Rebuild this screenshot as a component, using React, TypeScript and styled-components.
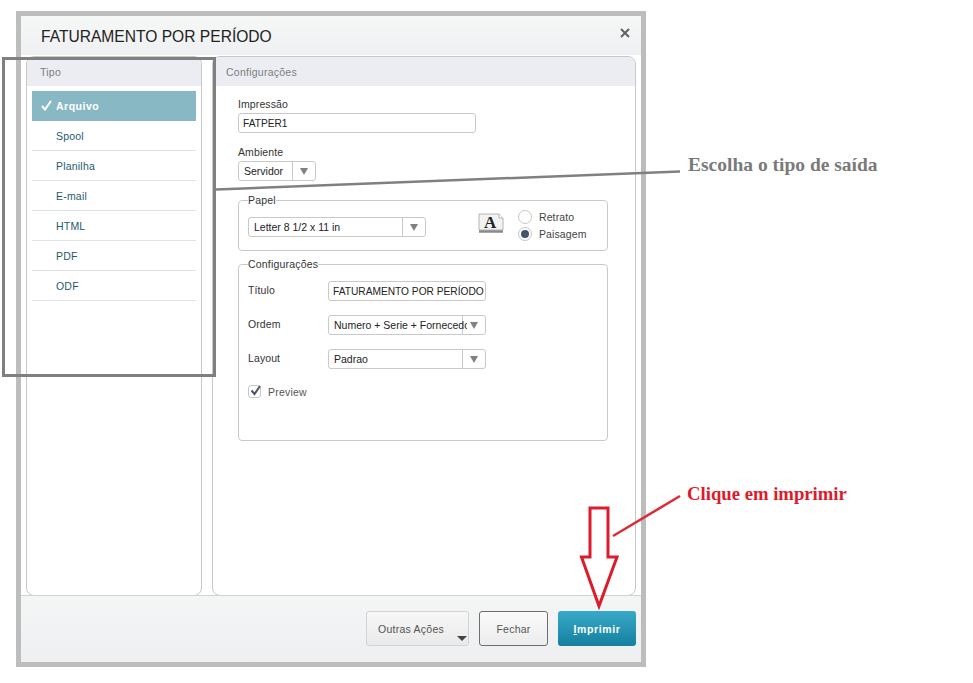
import React from "react";
import styled, { createGlobalStyle } from "styled-components";

const Global = createGlobalStyle`
  html, body { margin: 0; padding: 0; background: #fff; }
  body { font-family: "Liberation Sans", Arial, sans-serif; font-size: 11px; color: #333; }
`;

const Page = styled.div`
  position: relative;
  width: 973px;
  height: 683px;
  box-sizing: border-box;
  padding: 11px 0 0 16px;
  overflow: hidden;
`;
const Dialog = styled.div`
  width: 630px;
  height: 656px;
  box-sizing: border-box;
  border: 5px solid #bdbdbd;
  background: #fff;
  display: flex;
  flex-direction: column;
`;
const Header = styled.div`
  height: 39px;
  flex: none;
  display: flex;
  align-items: center;
  justify-content: space-between;
  padding: 0 10px 0 20px;
  background: linear-gradient(#f6f7f7, #eff0f1);
`;
const Title = styled.h1`
  margin: 0;
  font-size: 15.6px;
  font-weight: 400;
  color: #222;
  position: relative;
  top: 1px;
`;
const CloseIcon = styled.svg`
  width: 10px;
  height: 10px;
  position: relative;
  top: -3px;
  left: -1px;
`;
const Body = styled.div`
  flex: 1;
  min-height: 0;
  display: flex;
  gap: 10px;
  padding: 1px 5px 0;
  overflow: hidden;
`;
const Panel = styled.section<{ $w: number }>`
  width: ${(p) => p.$w}px;
  flex: none;
  box-sizing: border-box;
  height: 540px;
  border: 1px solid #c8c8c8;
  border-radius: 8px;
  overflow: hidden;
  background: #fff;
`;
const PanelHead = styled.div`
  height: 29px;
  line-height: 30px;
  padding-left: 13px;
  background: #ecedf2;
  color: #7b7d80;
  font-size: 10.5px;
  letter-spacing: 0.25px;
`;
const List = styled.ul`
  list-style: none;
  margin: 5px 5px 0;
  padding: 0;
`;
const Item = styled.li<{ $active?: boolean }>`
  position: relative;
  height: 30px;
  line-height: 30px;
  box-sizing: border-box;
  padding-left: 24px;
  font-size: 10.5px;
  letter-spacing: ${(p) => (p.$active ? 0.5 : 0.2)}px;
  color: ${(p) => (p.$active ? "#fff" : "#1f5a6e")};
  font-weight: ${(p) => (p.$active ? 700 : 400)};
  background: ${(p) => (p.$active ? "#89b8c5" : "transparent")};
  border-bottom: ${(p) => (p.$active ? "0" : "1px solid #dfe4e8")};
`;
const Check = styled.svg`
  position: absolute;
  left: 9px;
  top: 9px;
  width: 11px;
  height: 11px;
`;
const Form = styled.div`
  padding: 10px 27px 0 25px;
  display: flex;
  flex-direction: column;
`;
const Label = styled.label`
  display: block;
  font-size: 10.5px;
  line-height: 17px;
  letter-spacing: 0.1px;
  color: #333;
`;
const Box = styled.div<{ $w: number }>`
  width: ${(p) => p.$w}px;
  height: 20px;
  box-sizing: border-box;
  border: 1px solid #c9c9c9;
  border-radius: 3px;
  background: #fff;
  display: flex;
  align-items: center;
  font-size: 10.5px;
  color: #222;
  white-space: nowrap;
  overflow: hidden;
`;
const InputBox = styled(Box)`
  padding-left: 4px;
  font-size: 10.2px;
`;
const SelectText = styled.span`
  flex: 1;
  min-width: 0;
  overflow: hidden;
  padding-left: 5px;
  margin-right: -5px;
  position: relative;
`;
const Caret = styled.span`
  flex: none;
  width: 23px;
  height: 100%;
  box-sizing: border-box;
  border-left: 1px solid #c9c9c9;
  display: flex;
  align-items: center;
  justify-content: center;
  &::after {
    content: "";
    border-left: 4.5px solid transparent;
    border-right: 4.5px solid transparent;
    border-top: 7px solid #7e8287;
  }
`;
const Group = styled.div`
  margin-bottom: 11px;
`;
const Fieldset = styled.fieldset<{ $h: number; $mt: number }>`
  margin: ${(p) => p.$mt}px 0 0;
  padding: 0 9px;
  height: ${(p) => p.$h}px;
  box-sizing: border-box;
  border: 1px solid #c9c9c9;
  border-radius: 4px;
  width: 370px;
`;
const Legend = styled.legend`
  padding: 0;
  font-size: 10.5px;
  letter-spacing: 0.2px;
  line-height: 13px;
  color: #333;
`;
const PaperRow = styled.div`
  display: flex;
  align-items: flex-start;
  padding-top: 10px;
`;
const PageIcon = styled.svg`
  width: 26px;
  height: 21px;
  margin: -4px 0 0 52px;
  flex: none;
`;
const Radios = styled.div`
  margin: -7px 0 0 14px;
  display: flex;
  flex-direction: column;
  gap: 3px;
`;
const RadioRow = styled.div`
  display: flex;
  align-items: center;
  gap: 7px;
  height: 14px;
  font-size: 10.5px;
  letter-spacing: 0.1px;
  color: #444;
`;
const Radio = styled.span<{ $on?: boolean }>`
  width: 14px;
  height: 14px;
  box-sizing: border-box;
  border: 1px solid #c6c6c6;
  border-radius: 50%;
  background: #fff;
  display: flex;
  align-items: center;
  justify-content: center;
  &::after {
    content: "";
    width: 8px;
    height: 8px;
    border-radius: 50%;
    background: ${(p) => (p.$on ? "#47536b" : "transparent")};
  }
`;
const ConfRows = styled.div`
  display: flex;
  flex-direction: column;
  gap: 14px;
  padding-top: 10px;
`;
const ConfRow = styled.div`
  display: grid;
  grid-template-columns: 80px 158px;
  align-items: center;
`;
const ConfLabel = styled.span`
  font-size: 10.5px;
  letter-spacing: 0.1px;
  color: #333;
  position: relative;
  top: -1px;
`;
const PreviewRow = styled.div`
  display: flex;
  align-items: center;
  gap: 7px;
  margin-top: 16px;
  font-size: 10.5px;
  letter-spacing: 0.2px;
  color: #555;
`;
const CheckBox = styled.span`
  width: 13px;
  height: 13px;
  box-sizing: border-box;
  border: 1px solid #c6c6c6;
  border-radius: 3px;
  position: relative;
  flex: none;
`;
const CheckMark = styled.svg`
  position: absolute;
  left: 0;
  top: -2px;
  width: 13px;
  height: 13px;
`;
const Footer = styled.footer`
  height: 67px;
  flex: none;
  box-sizing: border-box;
  border-top: 1px solid #d2d2d2;
  background: linear-gradient(#f4f5f5, #eeeff1);
  display: flex;
  justify-content: flex-end;
  gap: 10px;
  padding: 15px 5px 0 0;
`;
const Button = styled.button`
  height: 35px;
  box-sizing: border-box;
  border-radius: 3px;
  font-family: inherit;
  font-size: 10.5px;
  letter-spacing: 0.25px;
  padding: 0;
  position: relative;
`;
const MenuButton = styled(Button)`
  width: 103px;
  border: 1px solid #d3d3d3;
  background: linear-gradient(#f7f7f7, #eaeaea);
  color: #555;
  text-align: left;
  padding: 0 0 0 11px;
  &::after {
    content: "";
    position: absolute;
    right: 1px;
    bottom: 4px;
    border-left: 5px solid transparent;
    border-right: 5px solid transparent;
    border-top: 5px solid #444;
  }
`;
const CloseButton = styled(Button)`
  width: 69px;
  border: 1px solid #6e6e6e;
  background: linear-gradient(#fafafa, #ececec);
  color: #555;
`;
const PrimaryButton = styled(Button)`
  width: 78px;
  border: 0;
  background: linear-gradient(#38a9c8, #15809f);
  color: #fff;
  font-weight: 700;
  letter-spacing: 0.6px;
`;
const Marker = styled.div`
  position: absolute;
  left: 2px;
  top: 57px;
  width: 214px;
  height: 320px;
  box-sizing: border-box;
  border: 3px solid #808080;
  pointer-events: none;
`;
const Drawing = styled.svg`
  position: absolute;
  left: 0;
  top: 0;
  width: 973px;
  height: 683px;
  pointer-events: none;
`;
const Note = styled.div<{ $color: string; $x: number; $y: number; $size: number }>`
  position: absolute;
  left: ${(p) => p.$x}px;
  top: ${(p) => p.$y}px;
  font-family: "Liberation Serif", "Times New Roman", serif;
  font-weight: 700;
  font-size: ${(p) => p.$size}px;
  line-height: 20px;
  white-space: nowrap;
  color: ${(p) => p.$color};
`;

const Select = ({ w, text }: { w: number; text: string }) => (
  <Box $w={w}>
    <SelectText>{text}</SelectText>
    <Caret />
  </Box>
);

export default function App() {
  const items = ["Spool", "Planilha", "E-mail", "HTML", "PDF", "ODF"];
  return (
    <Page>
      <Global />
      <Dialog>
        <Header>
          <Title>FATURAMENTO POR PERÍODO</Title>
          <CloseIcon viewBox="0 0 10 10">
            <path d="M1 1 L9 9 M9 1 L1 9" stroke="#5f6367" strokeWidth="2" />
          </CloseIcon>
        </Header>
        <Body>
          <Panel $w={176}>
            <PanelHead>Tipo</PanelHead>
            <List>
              <Item $active>
                <Check viewBox="0 0 11 11">
                  <path d="M1 6 L4 9.5 L10 1" fill="none" stroke="#fff" strokeWidth="2" />
                </Check>
                Arquivo
              </Item>
              {items.map((t) => (
                <Item key={t}>{t}</Item>
              ))}
            </List>
          </Panel>
          <Panel $w={424}>
            <PanelHead>Configurações</PanelHead>
            <Form>
              <Group>
                <Label>Impressão</Label>
                <InputBox $w={238}>FATPER1</InputBox>
              </Group>
              <Group>
                <Label>Ambiente</Label>
                <Select w={78} text="Servidor" />
              </Group>
              <Fieldset $h={57} $mt={2}>
                <Legend>Papel</Legend>
                <PaperRow>
                  <Select w={178} text="Letter 8 1/2 x 11 in" />
                  <PageIcon viewBox="0 0 26 21">
                    <path d="M1 1 H21 L25 5 V17 H1 Z" fill="#f2f2f2" stroke="#b5b5b5" />
                    <path d="M1 18.5 H25" stroke="#8a8a8a" strokeWidth="2.5" />
                    <path d="M21 1 V5 H25" fill="#fff" stroke="#b5b5b5" />
                    <text x="6" y="15" fontFamily="Liberation Serif, serif" fontWeight="700" fontSize="17" fill="#222">A</text>
                  </PageIcon>
                  <Radios>
                    <RadioRow><Radio />Retrato</RadioRow>
                    <RadioRow><Radio $on />Paisagem</RadioRow>
                  </Radios>
                </PaperRow>
              </Fieldset>
              <Fieldset $h={183} $mt={7}>
                <Legend>Configurações</Legend>
                <ConfRows>
                  <ConfRow>
                    <ConfLabel>Título</ConfLabel>
                    <InputBox $w={158}>FATURAMENTO POR PERÍODO</InputBox>
                  </ConfRow>
                  <ConfRow>
                    <ConfLabel>Ordem</ConfLabel>
                    <Select w={158} text="Numero + Serie + Fornecedor" />
                  </ConfRow>
                  <ConfRow>
                    <ConfLabel>Layout</ConfLabel>
                    <Select w={158} text="Padrao" />
                  </ConfRow>
                </ConfRows>
                <PreviewRow>
                  <CheckBox>
                    <CheckMark viewBox="0 0 13 13">
                      <path d="M2.5 6.5 L5.5 10 L11 2" fill="none" stroke="#4a5568" strokeWidth="2" />
                    </CheckMark>
                  </CheckBox>
                  Preview
                </PreviewRow>
              </Fieldset>
            </Form>
          </Panel>
        </Body>
        <Footer>
          <MenuButton>Outras Ações</MenuButton>
          <CloseButton>Fechar</CloseButton>
          <PrimaryButton><u>I</u>mprimir</PrimaryButton>
        </Footer>
      </Dialog>
      <Marker />
      <Drawing viewBox="0 0 973 683">
        <path d="M216 189.5 L680 171.5" stroke="#808080" strokeWidth="2.5" fill="none" />
        <path d="M590 508 H608 V557 H617 L599 606 L581.5 557 H590 Z" fill="none" stroke="#dc1c2b" strokeWidth="3" />
        <path d="M613 536 L680 496" stroke="#dc2b38" strokeWidth="2.5" fill="none" />
      </Drawing>
      <Note $color="#7a7a7a" $x={688} $y={155} $size={19.5}>Escolha o tipo de saída</Note>
      <Note $color="#dc1c2b" $x={687} $y={484} $size={18.7}>Clique em imprimir</Note>
    </Page>
  );
}
